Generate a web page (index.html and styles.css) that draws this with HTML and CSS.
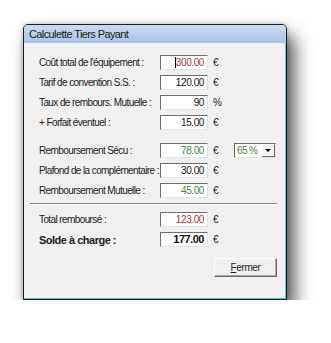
FILE: index.html
```html
<!DOCTYPE html>
<html lang="fr">
<head>
    <meta charset="UTF-8">
    <title>Calculette Tiers Payant</title>
    <link rel="stylesheet" href="styles.css">
</head>
<body>
    <div class="window">
        <div class="titlebar">Calculette Tiers Payant</div>
        <div class="content">
            <div class="row">
                <span class="label">Coût total de l'équipement :</span>
                <span class="field red"><span class="caret"></span>300.00</span>
                <span class="unit">€</span>
            </div>
            <div class="row">
                <span class="label">Tarif de convention S.S. :</span>
                <span class="field">120.00</span>
                <span class="unit">€</span>
            </div>
            <div class="row">
                <span class="label">Taux de rembours. Mutuelle :</span>
                <span class="field">90</span>
                <span class="unit">%</span>
            </div>
            <div class="row">
                <span class="label">+ Forfait éventuel :</span>
                <span class="field">15.00</span>
                <span class="unit">€</span>
            </div>

            <div class="row group-start">
                <span class="label">Remboursement Sécu :</span>
                <span class="field green">78.00</span>
                <span class="unit">€</span>
                <div class="combo">
                    <span class="combo-text">65 %</span>
                    <span class="combo-btn"><span class="arrow"></span></span>
                </div>
            </div>
            <div class="row">
                <span class="label">Plafond de la complémentaire :</span>
                <span class="field">30.00</span>
                <span class="unit">€</span>
            </div>
            <div class="row">
                <span class="label">Remboursement Mutuelle :</span>
                <span class="field green">45.00</span>
                <span class="unit">€</span>
            </div>

            <div class="separator"></div>

            <div class="row">
                <span class="label">Total remboursé :</span>
                <span class="field red">123.00</span>
                <span class="unit">€</span>
            </div>
            <div class="row total">
                <span class="label">Solde à charge :</span>
                <span class="field">177.00</span>
                <span class="unit">€</span>
            </div>

            <div class="actions">
                <button class="close-button"><u>F</u>ermer</button>
            </div>
        </div>
    </div>
</body>
</html>
```

FILE: styles.css
```css
body {
    margin: 0;
    background: #fff;
    font-family: "Liberation Sans", Arial, sans-serif;
    color: #222;
}
.window {
    margin: 24px 0 0 23px;
    width: 264px;
    height: 276px;
    box-sizing: border-box;
    border: 1px solid #1c1c1c;
    border-radius: 5px 5px 0 0;
    background: #f0f0f0;
    box-shadow: inset -1px -1px 0 #5fbfe9, 7px 12px 18px rgba(0, 0, 0, 0.7), 0 0 5px rgba(0, 0, 0, 0.25);
}
.titlebar {
    height: 18px;
    line-height: 18px;
    padding-left: 5px;
    border-radius: 4px 4px 0 0;
    background: linear-gradient(#c8dbf1, #aac4e6);
    font-size: 11px;
    letter-spacing: -0.6px;
    color: #1a1a1a;
}
.content {
    padding: 12px 0 0 15px;
}
.row {
    display: flex;
    align-items: center;
    height: 15px;
    margin-bottom: 5px;
    font-size: 10px;
    letter-spacing: -0.6px;
}
.group-start {
    margin-top: 13px;
}
.label {
    width: 121px;
    flex-shrink: 0;
    white-space: nowrap;
}
.field {
    width: 48px;
    height: 15px;
    box-sizing: border-box;
    background: #fff;
    border-top: 1px solid #6e6e6e;
    border-left: 1px solid #6e6e6e;
    border-right: 1px solid #e2e2e2;
    border-bottom: 1px solid #e2e2e2;
    text-align: right;
    padding-right: 3px;
    line-height: 13px;
    color: #111;
    letter-spacing: -0.4px;
}
.field.red {
    color: #b2303c;
}
.field.green {
    color: #3b8c3b;
}
.caret {
    display: inline-block;
    width: 1px;
    height: 11px;
    background: #000;
    vertical-align: -2px;
}
.unit {
    margin-left: 5px;
}
.combo {
    display: flex;
    margin-left: 16px;
    width: 42px;
    height: 15px;
    box-sizing: border-box;
    background: #fff;
    border-top: 1px solid #6e6e6e;
    border-left: 1px solid #6e6e6e;
    border-right: 1px solid #e2e2e2;
    border-bottom: 1px solid #e2e2e2;
}
.combo-text {
    flex: 1;
    padding-left: 2px;
    line-height: 13px;
    color: #3b8c3b;
}
.combo-btn {
    width: 13px;
    box-sizing: border-box;
    background: #f0f0f0;
    border-top: 1px solid #fff;
    border-left: 1px solid #fff;
    border-right: 1px solid #6a6a6a;
    border-bottom: 1px solid #6a6a6a;
    display: flex;
    align-items: center;
    justify-content: center;
}
.arrow {
    width: 0;
    height: 0;
    border-left: 3px solid transparent;
    border-right: 3px solid transparent;
    border-top: 3px solid #000;
}
.separator {
    margin: 0 0 7px -9px;
    width: 247px;
    border-top: 1px solid #8a8a8a;
    border-bottom: 1px solid #fff;
}
.total {
    margin-top: 1px;
}
.total .label,
.total .field {
    font-weight: bold;
    font-size: 11px;
    letter-spacing: -0.5px;
}
.actions {
    display: flex;
    justify-content: flex-end;
    padding-right: 9px;
    margin-top: 11px;
}
.close-button {
    width: 63px;
    height: 19px;
    padding: 0;
    background: #f0f0f0;
    border: 1px solid;
    border-color: #fff #6a6a6a #6a6a6a #fff;
    box-shadow: inset -1px -1px 0 #a8a8a8;
    font-family: "Liberation Sans", Arial, sans-serif;
    font-size: 10px;
    letter-spacing: -0.4px;
    color: #222;
}
```
